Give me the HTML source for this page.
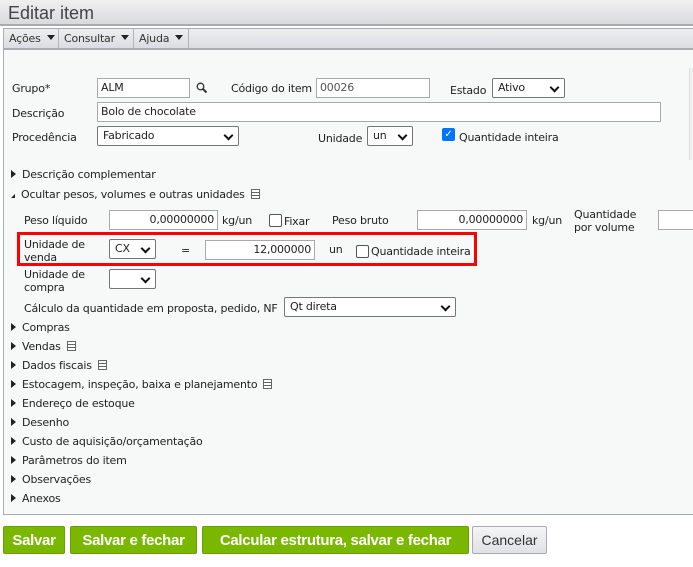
<!DOCTYPE html><html><head><meta charset="utf-8"><style>
*{box-sizing:border-box}
body{margin:0;width:693px;height:567px;background:#fff;font-family:"DejaVu Sans","Liberation Sans",sans-serif;font-size:11px;letter-spacing:-0.2px;color:#222;position:relative;overflow:hidden}
.a{position:absolute;white-space:nowrap}
.title{left:0;top:0;width:693px;height:26px;background:linear-gradient(#f0f0f1,#d9dadc);border-bottom:2px solid #a8abb0}
.title span{position:absolute;left:8px;top:3px;font-size:18px;letter-spacing:0;color:#444;font-family:"Liberation Sans",sans-serif}
.tb{left:3px;top:28px;width:690px;height:22px;background:linear-gradient(#eceef0,#dcdde0);border-top:1px solid #a8abb0;border-bottom:2px solid #a8abb0;border-left:1px solid #a8abb0}
.tb div{position:absolute;top:0;height:19px;border-right:1px solid #b0b3b8;padding:3px 0 0 5px;color:#333}
.tri{display:inline-block;width:0;height:0;border-left:4px solid transparent;border-right:4px solid transparent;border-top:5px solid #222;margin-left:6px;vertical-align:2px}
.panel{left:3px;top:50px;width:700px;height:465px;background:#f7f8f8;border-left:1px solid #a8abb0;border-bottom:1px solid #a8abb0}
.in{position:absolute;height:20px;background:#fff;border:1px solid #a9a9a9;padding:2px 3px;font-size:11px}
.r{text-align:right}
.sel{position:absolute;height:20px;background:#fff;border:1px solid #767676;border-radius:2px;padding:2px 5px}
.sel:after{content:"";position:absolute;right:6px;top:5px;width:5px;height:5px;border-right:2px solid #111;border-bottom:2px solid #111;transform:rotate(45deg)}
.cb{position:absolute;width:13px;height:13px;border:1px solid #555;border-radius:2px;background:#fff}
.ex{display:inline-block;width:0;height:0;border-top:4px solid transparent;border-bottom:4px solid transparent;border-left:5px solid #222;margin-right:6px;vertical-align:0}
.doc{display:inline-block;width:9px;height:10px;border:1px solid #666;margin-left:6px;vertical-align:-1px;background:linear-gradient(#fff 2px,#666 2px,#666 3px,#fff 3px,#fff 5px,#666 5px,#666 6px,#fff 6px)}
.btn{position:absolute;top:526px;height:28px;background:#7ab800;border:1px solid #6aa000;border-radius:2px;color:#fff;font-weight:bold;font-size:15px;letter-spacing:-0.3px;padding:5px 0 0;text-align:center;font-family:"Liberation Sans",sans-serif}
</style></head><body>
<div class="a title"><span>Editar item</span></div>
<div class="a tb"><div style="left:0;width:55px">Ações<span class="tri"></span></div><div style="left:55px;width:75px">Consultar<span class="tri"></span></div><div style="left:130px;width:55px">Ajuda<span class="tri"></span></div></div>
<div class="a panel"></div>
<div class="a" style="left:689px;top:68px;width:4px;height:92px;border-left:1px solid #ddd;background:#f0f0f0"></div>

<div class="a" style="left:12px;top:82px">Grupo*</div>
<div class="in" style="left:97px;top:78px;width:93px">ALM</div>
<svg class="a" style="left:196px;top:82px" width="12" height="12"><circle cx="4.5" cy="4.5" r="3.3" fill="none" stroke="#333" stroke-width="1.3"/><line x1="7" y1="7" x2="10.5" y2="10.5" stroke="#333" stroke-width="2"/></svg>
<div class="a" style="left:231px;top:82px">Código do item</div>
<div class="in" style="left:316px;top:78px;width:114px;color:#555">00026</div>
<div class="a" style="left:450px;top:84px">Estado</div>
<div class="sel" style="left:492px;top:78px;width:73px">Ativo</div>

<div class="a" style="left:12px;top:107px">Descrição</div>
<div class="in" style="left:97px;top:102px;width:564px">Bolo de chocolate</div>

<div class="a" style="left:12px;top:131px">Procedência</div>
<div class="sel" style="left:97px;top:126px;width:142px">Fabricado</div>
<div class="a" style="left:318px;top:132px">Unidade</div>
<div class="sel" style="left:367px;top:126px;width:46px">un</div>
<div class="cb" style="left:442px;top:128px;background:#0075ff;border-color:#0075ff;color:#fff;font-size:10px;line-height:11px;text-align:center;font-weight:bold">✓</div>
<div class="a" style="left:459px;top:131px">Quantidade inteira</div>

<div class="a" style="left:11px;top:168px"><span class="ex"></span>Descrição complementar</div>
<div class="a" style="left:11px;top:188px"><span class="ex" style="border-left:4px solid transparent;border-top:4px solid transparent;border-bottom:4px solid #222;border-right:0"></span>Ocultar pesos, volumes e outras unidades<span class="doc"></span></div>

<div class="a" style="left:24px;top:214px">Peso líquido</div>
<div class="in r" style="left:109px;top:210px;width:109px">0,00000000</div>
<div class="a" style="left:222px;top:214px">kg/un</div>
<div class="cb" style="left:269px;top:214px"></div>
<div class="a" style="left:284px;top:215px">Fixar</div>
<div class="a" style="left:332px;top:214px">Peso bruto</div>
<div class="in r" style="left:417px;top:210px;width:110px">0,00000000</div>
<div class="a" style="left:532px;top:214px">kg/un</div>
<div class="a" style="left:574px;top:208px;line-height:13px">Quantidade<br>por volume</div>
<div class="in" style="left:658px;top:210px;width:40px"></div>

<div class="a" style="left:17px;top:232px;width:460px;height:34px;border:3px solid #f00"></div>
<div class="a" style="left:24px;top:238px;line-height:13px">Unidade de<br>venda</div>
<div class="sel" style="left:109px;top:239px;width:47px">CX</div>
<div class="a" style="left:181px;top:244px">=</div>
<div class="in r" style="left:205px;top:240px;width:110px">12,000000</div>
<div class="a" style="left:329px;top:243px">un</div>
<div class="cb" style="left:356px;top:245px"></div>
<div class="a" style="left:371px;top:245px">Quantidade inteira</div>

<div class="a" style="left:24px;top:268px;line-height:13px">Unidade de<br>compra</div>
<div class="sel" style="left:109px;top:269px;width:47px"></div>

<div class="a" style="left:24px;top:302px">Cálculo da quantidade em proposta, pedido, NF</div>
<div class="sel" style="left:284px;top:297px;width:172px">Qt direta</div>

<div class="a" style="left:11px;top:321px"><span class="ex"></span>Compras</div>
<div class="a" style="left:11px;top:340px"><span class="ex"></span>Vendas<span class="doc"></span></div>
<div class="a" style="left:11px;top:359px"><span class="ex"></span>Dados fiscais<span class="doc"></span></div>
<div class="a" style="left:11px;top:378px"><span class="ex"></span>Estocagem, inspeção, baixa e planejamento<span class="doc"></span></div>
<div class="a" style="left:11px;top:397px"><span class="ex"></span>Endereço de estoque</div>
<div class="a" style="left:11px;top:416px"><span class="ex"></span>Desenho</div>
<div class="a" style="left:11px;top:435px"><span class="ex"></span>Custo de aquisição/orçamentação</div>
<div class="a" style="left:11px;top:454px"><span class="ex"></span>Parâmetros do item</div>
<div class="a" style="left:11px;top:473px"><span class="ex"></span>Observações</div>
<div class="a" style="left:11px;top:492px"><span class="ex"></span>Anexos</div>

<div class="btn" style="left:3px;width:62px">Salvar</div>
<div class="btn" style="left:70px;width:127px">Salvar e fechar</div>
<div class="btn" style="left:202px;width:267px">Calcular estrutura, salvar e fechar</div>
<div class="btn" style="left:472px;width:75px;background:linear-gradient(#f4f5f6,#dfe1e4);border-color:#a8abb0;color:#333;font-weight:normal;font-size:14px;letter-spacing:0">Cancelar</div>
</body></html>
